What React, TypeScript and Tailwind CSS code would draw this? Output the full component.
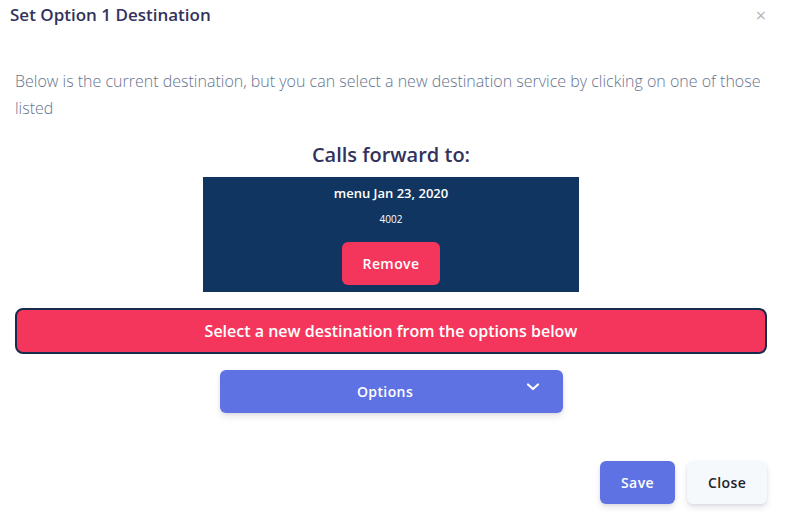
import React from 'react';

const App: React.FC = () => {
  return (
    <div className="w-[786px] h-[512px] bg-white overflow-hidden" style={{ fontFamily: '"Open Sans", sans-serif' }}>
      {/* Header */}
      <div className="flex items-start justify-between pl-[10px] pr-[20px] pt-[3px]">
        <h5 className="text-[17px] font-semibold text-[#32325d] leading-[24px]">Set Option 1 Destination</h5>
        <button className="text-[#b5b5b5] text-[18px] leading-[24px]">×</button>
      </div>

      {/* Body */}
      <div className="pl-[15px] pr-[19px]">
        <p className="mt-[41px] text-[16px] font-light leading-[27px] text-[#66748e]">
          Below is the current destination, but you can select a new destination service by clicking on one of those listed
        </p>

        <h3 className="mt-[18px] text-center text-[20px] font-semibold text-[#32325d] leading-[30px]">Calls forward to:</h3>

        <div className="mx-auto mt-[7px] w-[376px] h-[115px] bg-[#0f3560] flex flex-col items-center text-white">
          <div className="mt-[7px] text-[13px] font-semibold leading-[18px]">menu Jan 23, 2020</div>
          <div className="mt-[10px] text-[10px] leading-[14px]">4002</div>
          <button className="mt-[16px] w-[98px] h-[43px] rounded-[6px] bg-[#f5365c] text-[14px] font-semibold tracking-[0.4px]">
            Remove
          </button>
        </div>

        <button className="mt-[16px] w-full h-[46px] rounded-[8px] border-2 border-[#172b4d] bg-[#f5365c] text-white text-[16px] font-semibold">
          Select a new destination from the options below
        </button>

        <div className="mt-[16px] mx-auto w-[343px] h-[43px] rounded-[6px] bg-[#5e72e4] shadow-[0_4px_6px_rgba(50,50,93,0.11),0_1px_3px_rgba(0,0,0,0.08)] relative flex items-center justify-center pr-[12px] text-white">
          <span className="text-[14px] font-semibold tracking-[0.4px]">Options</span>
          <svg className="absolute left-[306px] top-[12px]" width="14" height="10" viewBox="0 0 14 10" fill="none">
            <path d="M2 2.5 L7 7 L12 2.5" stroke="white" strokeWidth="2.2" strokeLinecap="round" strokeLinejoin="round" />
          </svg>
        </div>
      </div>

      {/* Footer */}
      <div className="mt-[48px] flex justify-end gap-[12px] pr-[19px]">
        <button className="w-[75px] h-[43px] rounded-[6px] bg-[#5e72e4] text-white text-[14px] font-semibold tracking-[0.4px] shadow-[0_4px_6px_rgba(50,50,93,0.11),0_1px_3px_rgba(0,0,0,0.08)]">
          Save
        </button>
        <button className="w-[80px] h-[43px] rounded-[6px] bg-[#f6f9fc] text-[#212529] text-[14px] font-semibold tracking-[0.4px] shadow-[0_4px_6px_rgba(50,50,93,0.11),0_1px_3px_rgba(0,0,0,0.08)]">
          Close
        </button>
      </div>
    </div>
  );
};

export default App;
